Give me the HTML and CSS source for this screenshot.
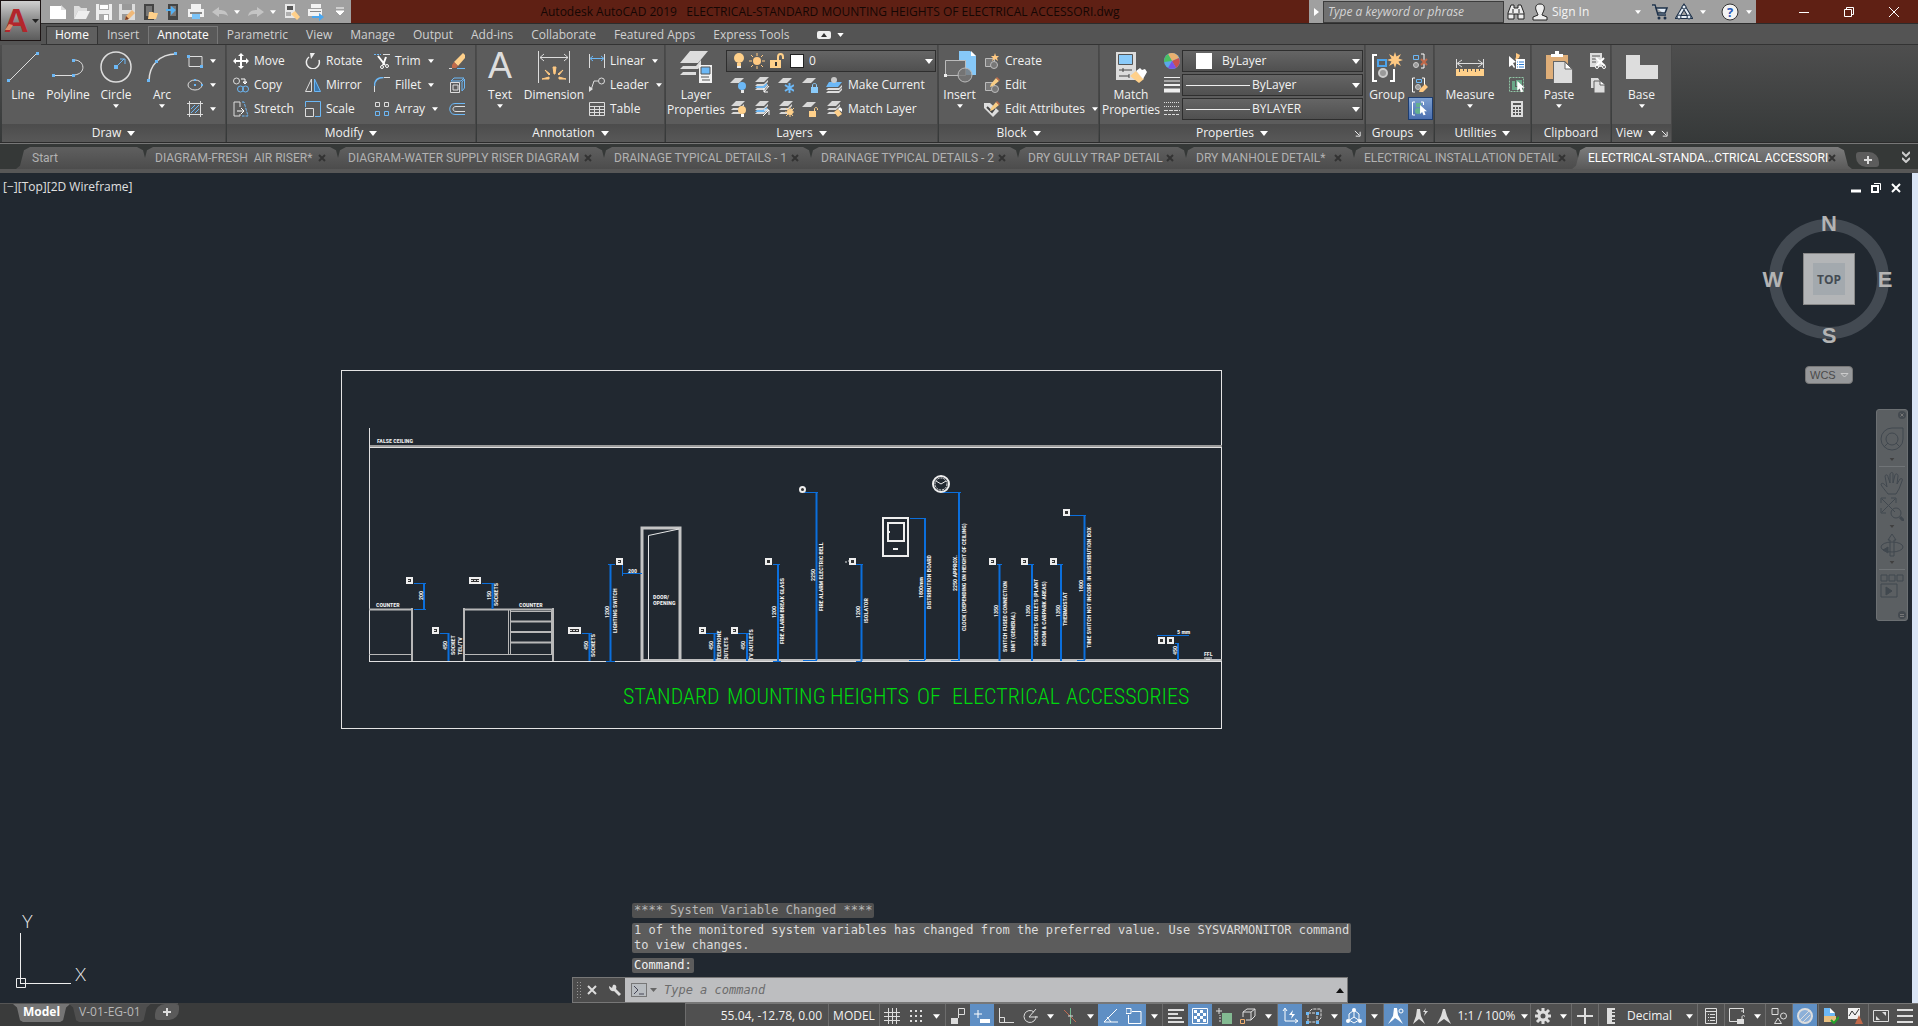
FILE: index.html
```html
<!DOCTYPE html>
<html lang="en">
<head>
  <meta charset="UTF-8" />
  <meta name="viewport" content="width=device-width, initial-scale=1" />
  <title>Autodesk AutoCAD 2019 - ELECTRICAL-STANDARD MOUNTING HEIGHTS OF ELECTRICAL ACCESSORI.dwg</title>
  <link rel="stylesheet" href="styles.css">
</head>
<body>
  <!-- Shared icons -->
  <svg class="sprite" aria-hidden="true">
    <symbol id="caret" viewBox="0 0 8 5"><path d="M0 0h8L4 5z" fill="#fff"/></symbol>
    <symbol id="close" viewBox="0 0 8 8"><path d="M1 1l6 6M7 1L1 7" stroke="#333" stroke-width="2"/></symbol>
    <symbol id="sheets" viewBox="0 0 16 16"><path d="M6 0h9l-5 5H1zM3 7h7l4-4v2l-4 4H1zM3 11h7l4-4v2l-4 4H1z" fill="#d8d8d8"/></symbol>
    <symbol id="sheet" viewBox="0 0 16 16"><path d="M5 1h9L9 6H0z" fill="#d8d8d8"/></symbol>
    <symbol id="pencil" viewBox="0 0 16 16"><path d="M7 7l5-6 3 3-6 5-3 1z" fill="#f8cd85"/><path d="M12 1l1-1 3 3-1 1z" fill="#c06a48"/></symbol>
    <symbol id="star" viewBox="0 0 16 16"><path d="M8 0l1.500 4.500L14 2l-2.500 4.500L16 8l-4.500 1.500L14 14l-4.500-2.500L8 16l-1.500-4.500L2 14l2.500-4.500L0 8l4.500-1.500L2 2l4.500 2.500z" fill="#ffc982"/></symbol>
    <symbol id="cursor" viewBox="0 0 16 16"><path d="M3 0v13l3-3 2 5 3-1-2-5h4z" fill="#fff"/></symbol>
    <symbol id="launch" viewBox="0 0 8 8"><path d="M1 1l5 5M2 7h5V2" stroke="#fff" fill="none"/></symbol>
  </svg>

  <header class="top">
    <button class="app-button" aria-label="Application menu">
      <svg width="39" height="39" viewBox="0 0 39 39"><text x="3" y="31" class="logo-a">A</text><path d="M4 29l4-6 4 1-3 5z" fill="#d98f6c"/><path d="M31 18h7l-3.500 4z" fill="#222"/></svg>
    </button>

    <div class="title-bar">
      <div class="quick">
        <button aria-label="New"><svg viewBox="0 0 18 18"><path d="M1 3h11l5 4v9H1z" fill="#fff"/><path d="M12 2v5h5z" fill="#ddd"/></svg></button>
        <button aria-label="Open"><svg viewBox="0 0 18 18"><path d="M2 16V3h5l2 2h6v3H6z" fill="#ddd"/><path d="M6 8h12l-4 8H2z" fill="#eee"/></svg></button>
        <button aria-label="Save"><svg viewBox="0 0 18 18"><path d="M1 1h16v16H1z" fill="#eee"/><path d="M4 1h10v6H4zM4 11h10v6H4z" fill="#aaa"/><path d="M5 2h8v4H5zM9 12h4v5H9z" fill="#fff"/></svg></button>
        <button aria-label="Save as"><svg viewBox="0 0 18 18"><path d="M1 1h16v16H1z" fill="#ddd"/><path d="M4 1h10v6H4zM4 11h6v6H4z" fill="#999"/><path d="M8 13l6-6 3 3-6 6-4 1z" fill="#f0b878"/><path d="M8 13l3 3-4 1z" fill="#7b3d24"/></svg></button>
        <button aria-label="Open from mobile"><svg viewBox="0 0 18 18"><path d="M3 1h10v16H3z" fill="#444"/><path d="M5 3h6v10H5z" fill="#777"/><path d="M8 9h4l1 1h4l-2 6H7z" fill="#ffd08a"/></svg></button>
        <button aria-label="Save to mobile"><svg viewBox="0 0 18 18"><path d="M4 1h10v16H4z" fill="#444"/><path d="M6 3h6v10H6z" fill="#777"/><path d="M2 6h5V3l5 4-5 5V8H2z" fill="#55b0f2"/></svg></button>
        <button aria-label="Plot"><svg viewBox="0 0 18 18"><path d="M4 1h10v5H4zM1 6h16v8H1z" fill="#f2f2f2"/><path d="M3 9h12v2H3z" fill="#888"/><path d="M5 11h8v5H5z" fill="#7cc4f8"/></svg></button>
        <button aria-label="Undo"><svg viewBox="0 0 18 18"><path d="M1 9l7-5v3c6 0 8 2 9 6-3-2-5-2-9-2v3z" fill="#c4c4c4"/></svg></button>
        <svg class="caret"><use href="#caret"/></svg>
        <button aria-label="Redo"><svg viewBox="0 0 18 18"><path d="M17 9l-7-5v3c-6 0-8 2-9 6 3-2 5-2 9-2v3z" fill="#c4c4c4"/></svg></button>
        <svg class="caret"><use href="#caret"/></svg>
        <button aria-label="Match properties"><svg viewBox="0 0 18 18"><path d="M2 1h10v14H2z" fill="#e8e8e8"/><path d="M4 3h6v4H4z" fill="#555"/><path d="M3 10h5M3 12h5" stroke="#777"/><path d="M8 11l4-3 5 6-3 3z" fill="#ffd08a"/></svg></button>
        <button aria-label="Batch plot"><svg viewBox="0 0 18 18"><path d="M4 1h10v4H4zM1 6h14v7H1z" fill="#f2f2f2"/><path d="M3 8h11v1H3z" fill="#888"/><path d="M5 13h7v-3l5 4-5 4v-3H5z" fill="#4aa6ee"/></svg></button>
        <button class="quick-more" aria-label="Customize"><svg viewBox="0 0 10 10"><path d="M1 1h8M1 4h8L5 8z" fill="#fff" stroke="#fff"/></svg></button>
      </div>
      <h1>Autodesk AutoCAD 2019 &nbsp; ELECTRICAL-STANDARD MOUNTING HEIGHTS OF ELECTRICAL ACCESSORI.dwg</h1>
      <div class="info">
        <button class="info-toggle" aria-label="Collapse"><svg viewBox="0 0 5 8"><path d="M0 0l5 4-5 4z" fill="#fff"/></svg></button>
        <input class="search" type="text" placeholder="Type a keyword or phrase" aria-label="Search">
        <button aria-label="Find"><svg viewBox="0 0 18 18"><path d="M4 2h3v3h4V2h3l3 8v6h-6v-5H7v5H1v-6z" fill="#eee" stroke="#222"/><path d="M1 11h6M11 11h6M6 6v4M12 6v4" stroke="#222"/></svg></button>
        <a class="sign-in" href="#"><svg viewBox="0 0 18 18"><path d="M9 1c4 0 5 3 4 6s-2 4-2 5l5 2v3H2v-3l5-2c0-1-1-2-2-5S5 1 9 1z" fill="#eee" stroke="#222"/></svg>Sign In</a>
        <svg class="caret"><use href="#caret"/></svg>
        <button class="store" aria-label="Store"><svg viewBox="0 0 18 18"><path d="M1 2h3l3 10h8M5 5h11l-2 5H6" fill="#dfe8f2" stroke="#1d3048" stroke-width="1.500"/><circle cx="8" cy="15" r="1.500" fill="#1d3048"/><circle cx="14" cy="15" r="1.500" fill="#1d3048"/></svg></button>
        <button aria-label="Stay connected"><svg viewBox="0 0 18 18"><path d="M9 4l6 10H3z" fill="none" stroke="#1d3048" stroke-width="4"/><path d="M9 4l6 10H3z" fill="none" stroke="#e6eef6" stroke-width="2"/><circle cx="9" cy="4" r="2" fill="#e6eef6" stroke="#1d3048"/><circle cx="4" cy="14" r="2" fill="#e6eef6" stroke="#1d3048"/><circle cx="14" cy="14" r="2" fill="#e6eef6" stroke="#1d3048"/></svg></button>
        <svg class="caret"><use href="#caret"/></svg>
        <button class="help" aria-label="Help"><svg viewBox="0 0 18 18"><circle cx="9" cy="9" r="8" fill="#f4f4f4" stroke="#333"/><text x="6" y="14" class="help-mark">?</text></svg></button>
        <svg class="caret"><use href="#caret"/></svg>
      </div>
      <div class="window-buttons">
        <button aria-label="Minimize"><svg viewBox="0 0 12 12"><path d="M1 6.500h10" stroke="#fff"/></svg></button>
        <button aria-label="Restore"><svg viewBox="0 0 12 12"><path d="M1.500 3.500h7v7h-7zM3.500 3V1.500h7v7H9" fill="none" stroke="#fff"/></svg></button>
        <button aria-label="Close"><svg viewBox="0 0 12 12"><path d="M1 1l10 10M11 1L1 11" stroke="#fff"/></svg></button>
      </div>
    </div>

    <nav class="ribbon-tabs">
      <a class="current" href="#">Home</a><a href="#">Insert</a><a class="hover" href="#">Annotate</a><a href="#">Parametric</a><a href="#">View</a><a href="#">Manage</a><a href="#">Output</a><a href="#">Add-ins</a><a href="#">Collaborate</a><a href="#">Featured Apps</a><a href="#">Express Tools</a>
      <button class="ribbon-toggle" aria-label="Minimize ribbon"><svg width="14" height="8"><rect width="14" height="8" rx="2" fill="#eee"/><path d="M4 6h6L7 2z" fill="#333"/></svg><svg class="caret"><use href="#caret"/></svg></button>
    </nav>
  </header>

  <!-- Ribbon -->
  <div class="ribbon">
    <section class="panel draw">
      <div class="tools">
        <button class="big w-line"><svg viewBox="0 0 32 32"><path d="M2 30L30 2" stroke="#ddd"/><path d="M0 28h3v3H0zM29 1h3v3h-3z" fill="#6cb8f6"/></svg><span>Line</span></button>
        <button class="big w-poly"><svg viewBox="0 0 32 32"><path d="M1 24.500h21M21 9c12-1 14 14 1 15" fill="none" stroke="#ddd"/><path d="M0 23h3v3H0zM20 23h3v3h-3zM20 8h3v3h-3z" fill="#6cb8f6"/></svg><span>Polyline</span></button>
        <button class="big w-circle"><svg viewBox="0 0 32 32"><circle cx="16" cy="16" r="15" fill="none" stroke="#ddd" stroke-width="1.500"/><path d="M16 16l8-8M20 8h5v5" fill="none" stroke="#6cb8f6"/><path d="M14 14h4v4h-4z" fill="#6cb8f6"/></svg><span>Circle</span><svg class="caret"><use href="#caret"/></svg></button>
        <button class="big w-arc"><svg viewBox="0 0 32 32"><path d="M3 30C3 14 14 3 30 3" fill="none" stroke="#ddd" stroke-width="1.500"/><path d="M1 28h3v3H1zM28 1h3v3h-3zM9 9h3v3H9z" fill="#6cb8f6"/></svg><span>Arc</span><svg class="caret"><use href="#caret"/></svg></button>
        <div class="stack">
          <button class="small" aria-label="Rectangle"><svg viewBox="0 0 16 16"><path d="M2 3.500h13v10H2z" fill="none" stroke="#ddd"/><path d="M0 2h3v3H0zM13 12h3v3h-3z" fill="#6cb8f6"/></svg><svg class="caret"><use href="#caret"/></svg></button>
          <button class="small" aria-label="Ellipse"><svg viewBox="0 0 16 16"><ellipse cx="8" cy="8" rx="7" ry="5" fill="none" stroke="#ddd"/><path d="M7 7h2v2H7zM7 2h2v2H7zM14 7h2v2h-2z" fill="#6cb8f6"/></svg><svg class="caret"><use href="#caret"/></svg></button>
          <button class="small" aria-label="Hatch"><svg viewBox="0 0 16 16"><path d="M2.500 0v16M13.500 0v16M0 2.500h16M0 13.500h16" stroke="#ddd"/><path d="M4 8l4-4M4 12l8-8M8 12l4-4" stroke="#6cb8f6"/></svg><svg class="caret"><use href="#caret"/></svg></button>
        </div>
      </div>
      <h2>Draw <svg class="caret"><use href="#caret"/></svg></h2>
    </section>

    <section class="panel modify">
      <div class="tools">
        <div class="stack col-a">
          <button class="small"><svg viewBox="0 0 16 16"><path d="M8 0l3 3H9v4h4V5l3 3-3 3V9H9v4h2l-3 3-3-3h2V9H3v2L0 8l3-3v2h4V3H5z" fill="#fff"/></svg><span>Move</span></button>
          <button class="small"><svg viewBox="0 0 16 16"><circle cx="3.500" cy="4" r="3" fill="none" stroke="#ddd"/><path d="M8 2h4v4M10 5h4l-2 2z" fill="none" stroke="#fff"/><circle cx="7.500" cy="12" r="3" fill="none" stroke="#6cb8f6"/><circle cx="12.500" cy="12" r="3" fill="none" stroke="#6cb8f6"/></svg><span>Copy</span></button>
          <button class="small"><svg viewBox="0 0 16 16"><path d="M7 6V1H1v14h6v-2" fill="none" stroke="#ddd"/><path d="M4 10h6M8 7l3 3-3 3" stroke="#fff" fill="none"/><path d="M9 1h2l4 14H9" fill="none" stroke="#6cb8f6" stroke-dasharray="3 1"/></svg><span>Stretch</span></button>
        </div>
        <div class="stack col-b">
          <button class="small"><svg viewBox="0 0 16 16"><path d="M4 4a6.500 6.500 0 1 0 10 3" fill="none" stroke="#eee" stroke-width="1.500"/><path d="M5 0h5L6 6z" fill="#eee"/></svg><span>Rotate</span></button>
          <button class="small"><svg viewBox="0 0 16 16"><path d="M6.500 2v12.500h-6z" fill="none" stroke="#ddd"/><path d="M9.500 2v12.500h6z" fill="#3c78ae" stroke="#6cb8f6"/></svg><span>Mirror</span></button>
          <button class="small"><svg viewBox="0 0 16 16"><path d="M.5 6V.5h15v15H10" fill="none" stroke="#6cb8f6"/><path d="M.5 7.500h8v8h-8z" fill="none" stroke="#ddd"/></svg><span>Scale</span></button>
        </div>
        <div class="stack col-c">
          <button class="small"><svg viewBox="0 0 16 16"><path d="M0 1.500h7" stroke="#6cb8f6" stroke-dasharray="2 1"/><path d="M9 1.500h7" stroke="#ddd"/><path d="M4 3l7 9M12 4l-3 8" stroke="#fff" stroke-width="2"/><circle cx="8" cy="14" r="1.500" fill="none" stroke="#fff"/><circle cx="13" cy="13" r="1.500" fill="none" stroke="#fff"/></svg><span>Trim</span><svg class="caret"><use href="#caret"/></svg></button>
          <button class="small"><svg viewBox="0 0 16 16"><path d="M.5 15V9M10 .5h6" stroke="#ddd"/><path d="M.5 9c0-6 3-8.500 9-8.500" fill="none" stroke="#6cb8f6" stroke-width="1.500"/></svg><span>Fillet</span><svg class="caret"><use href="#caret"/></svg></button>
          <button class="small"><svg viewBox="0 0 16 16"><path d="M1.500 1.500h4v4h-4zM10.500 1.500h4v4h-4z" fill="none" stroke="#ddd"/><path d="M1.500 10.500h4v4h-4zM10.500 10.500h4v4h-4z" fill="none" stroke="#6cb8f6"/></svg><span>Array</span><svg class="caret"><use href="#caret"/></svg></button>
        </div>
        <div class="stack">
          <button class="small" aria-label="Erase"><svg viewBox="0 0 16 16"><path d="M5 9L14 0l2 2v3l-7 8z" fill="#ffd08a"/><path d="M5 9l4 4-2 2H3v-3z" fill="#c0694a"/><path d="M0 15.500h3" stroke="#ddd"/><path d="M8 15.500h8" stroke="#6cb8f6"/></svg></button>
          <button class="small" aria-label="Explode"><svg viewBox="0 0 16 16"><path d="M1.500 5.500h9v10h-9zM4 8h5v5H4z" fill="none" stroke="#ddd"/><path d="M2 4l3-3h10l-3 3zM13 5l2.500-3v9L13 14z" fill="none" stroke="#6cb8f6"/></svg></button>
          <button class="small" aria-label="Offset"><svg viewBox="0 0 16 16"><path d="M16 2.500H6c-7 0-7 11 0 11h10" fill="none" stroke="#6cb8f6"/><path d="M16 5.500H7c-4 0-4 5 0 5h9" fill="none" stroke="#ddd"/></svg></button>
        </div>
      </div>
      <h2>Modify <svg class="caret"><use href="#caret"/></svg></h2>
    </section>

    <section class="panel annotation">
      <div class="tools">
        <button class="big w-text"><svg viewBox="0 0 32 32"><text x="16" y="27" class="big-a">A</text></svg><span>Text</span><svg class="caret"><use href="#caret"/></svg></button>
        <button class="big w-dim"><svg viewBox="0 0 32 32"><path d="M.5 0v32M31.500 0v32M2 6.500h28M6 3L2 6.500 6 10M26 3l4 3.500-4 3.500" stroke="#ddd" fill="none"/><path d="M15 16h3l-1 7h-1zM7 19l5 4-1 1zM25 19l-5 4 1 1zM4 28l7-2v2zM28 28l-7-2v2z" fill="#ffc982" stroke="#ffc982"/></svg><span>Dimension</span></button>
        <div class="stack">
          <button class="small"><svg viewBox="0 0 16 16"><path d="M.5 1v14M15.500 1v14" stroke="#ddd"/><path d="M2 5.500h12M4 3L1 5.500 4 8M12 3l3 2.500L12 8" fill="none" stroke="#6cb8f6"/></svg><span>Linear</span><svg class="caret"><use href="#caret"/></svg></button>
          <button class="small"><svg viewBox="0 0 16 16"><circle cx="12.500" cy="4" r="3" fill="none" stroke="#ddd"/><path d="M9 4H5L2 13" fill="none" stroke="#ddd"/><path d="M0 15v-6l4 3z" fill="#ddd"/></svg><span>Leader</span><svg class="caret"><use href="#caret"/></svg></button>
          <button class="small"><svg viewBox="0 0 16 16"><path d="M.5 1.500h15v13H.5zM0 5.500h16M0 8.500h16M0 11.500h16M5.500 5v10M10.500 5v10" fill="none" stroke="#ddd"/></svg><span>Table</span></button>
        </div>
      </div>
      <h2>Annotation <svg class="caret"><use href="#caret"/></svg></h2>
    </section>

    <section class="panel layers">
      <div class="tools">
        <button class="big w-layer"><svg viewBox="0 0 32 32"><path d="M10 0h18L18 12H0zM3 15h13l5-6v6l-3 3H0zM3 21h13v3H0z" fill="#ddd"/><path d="M19 14h13v18H19z" fill="#f2f2f2"/><path d="M21 16h9v7h-9z" fill="#6cb8f6" stroke="#555"/><path d="M21 26h8M22 29h8" stroke="#555"/></svg><span>Layer<br>Properties</span></button>
        <div class="layer-side">
          <div class="combo">
            <svg width="54" height="18" viewBox="0 0 54 18"><circle cx="7" cy="6" r="5" fill="#ffd08a"/><path d="M5 11h4v4H5z" fill="#ffd08a"/><path d="M5 14h4v2H5z" fill="#eee"/><circle cx="25" cy="9" r="4" fill="#ffc982"/><path d="M25 1v3M25 14v3M17 9h3M30 9h3M19 3l2 2M29 13l2 2M31 3l-2 2M21 13l-2 2" stroke="#ffc982"/><path d="M38 8h11v8H38z" fill="#ffd08a"/><path d="M46 8V5c0-4 5-4 5 0v2" fill="none" stroke="#ffd08a" stroke-width="2"/><path d="M43 10h2v4h-2z" fill="#333"/></svg>
            <i class="swatch small-swatch"></i>
            <select aria-label="Layer"><option>0</option></select>
            <svg class="caret"><use href="#caret"/></svg>
          </div>
          <div class="row">
            <button aria-label="Layer off"><svg viewBox="0 0 16 16"><use href="#sheet"/><circle cx="12" cy="9" r="4" fill="#6cb8f6"/><path d="M11 13h3v3h-3z" fill="#e8e8e8"/></svg></button>
            <button aria-label="Isolate"><svg viewBox="0 0 16 16"><use href="#sheets"/><path d="M3 9h6l4-3v2l-3 3H1z" fill="#6cb8f6"/><path d="M15 9l-5 6M10 11v4h4" stroke="#fff" fill="none"/></svg></button>
            <button aria-label="Freeze"><svg viewBox="0 0 16 16"><use href="#sheet"/><path d="M11.500 6v10M7 8l9 6M16 8l-9 6" stroke="#6cb8f6" stroke-width="2"/></svg></button>
            <button aria-label="Lock"><svg viewBox="0 0 16 16"><use href="#sheet"/><path d="M9 10h7v6H9z" fill="#8acbfa"/><path d="M10.500 10V8c0-2 4-2 4 0v2" fill="none" stroke="#8acbfa"/></svg></button>
            <button class="make"><svg viewBox="0 0 16 16"><path d="M3 5h13l-4 5H0z" fill="#6cb8f6"/><path d="M2 11h11l3-3v2l-3 3H0zM2 14h11l3-3v2l-3 3H0z" fill="#ddd"/><circle cx="8" cy="3" r="3" fill="#c8c8c8"/></svg><span>Make Current</span></button>
          </div>
          <div class="row">
            <button aria-label="Layers on"><svg viewBox="0 0 16 16"><use href="#sheets"/><circle cx="12" cy="9" r="4" fill="#ffd08a"/><path d="M11 13h3v3h-3z" fill="#fff"/></svg></button>
            <button aria-label="Unisolate"><svg viewBox="0 0 16 16"><use href="#sheets"/><path d="M3 9h6l4-3v2l-3 3H1z" fill="#6cb8f6"/><path d="M9 15l6-6M10 9h5v5" stroke="#fff" fill="none"/></svg></button>
            <button aria-label="Thaw"><svg viewBox="0 0 16 16"><use href="#sheets"/><circle cx="12" cy="11" r="3" fill="#ffd08a"/><path d="M12 6v10M7 11h9M8 7l7 8M16 7l-8 8" stroke="#ffd08a"/></svg></button>
            <button aria-label="Unlock"><svg viewBox="0 0 16 16"><use href="#sheet"/><path d="M7 10h7v6H7z" fill="#ffd08a"/><path d="M12.500 10V8c0-2 3-2 3 0v1" fill="none" stroke="#ffd08a"/></svg></button>
            <button class="make"><svg viewBox="0 0 16 16"><use href="#sheets"/><path d="M8 11l4-3 4 5-4 3z" fill="#ffd08a"/><path d="M12 8l2-2 2 2v3z" fill="#fff"/></svg><span>Match Layer</span></button>
          </div>
        </div>
      </div>
      <h2>Layers <svg class="caret"><use href="#caret"/></svg></h2>
    </section>

    <section class="panel block">
      <div class="tools">
        <button class="big w-insert"><svg viewBox="0 0 32 32"><path d="M15 0h11l6 5v19H15z" fill="#86c8f8"/><path d="M27 0v5h5z" fill="#fff"/><path d="M1.500 9.500h20v15h-20z" fill="#6a6a6a" stroke="#bbb"/><circle cx="21" cy="24" r="7" fill="#777" fill-opacity=".8" stroke="#bbb"/><path d="M0 23h3v3H0z" fill="#eee"/></svg><span>Insert</span><svg class="caret"><use href="#caret"/></svg></button>
        <div class="stack">
          <button class="small"><svg viewBox="0 0 16 16"><path d="M1.500 5.500h9v8h-9z" fill="#777" stroke="#bbb"/><circle cx="10" cy="12" r="3.500" fill="#777" stroke="#bbb"/><path d="M11 0l1 3h3l-2 2 1 3-3-2-3 2 1-3-2-2h3z" fill="#ffc982"/></svg><span>Create</span></button>
          <button class="small"><svg viewBox="0 0 16 16"><path d="M1.500 5.500h9v8h-9z" fill="#777" stroke="#bbb"/><circle cx="11" cy="12" r="3.500" fill="#777" stroke="#bbb"/><use href="#pencil"/></svg><span>Edit</span></button>
          <button class="small"><svg viewBox="0 0 16 16"><path d="M0 2h6l9 8-6 6-9-9z" fill="#ddd"/><path d="M3 6l5 5 3-4" fill="none" stroke="#444" stroke-width="2"/><use href="#pencil"/></svg><span>Edit Attributes</span><svg class="caret"><use href="#caret"/></svg></button>
        </div>
      </div>
      <h2>Block <svg class="caret"><use href="#caret"/></svg></h2>
    </section>

    <section class="panel properties">
      <div class="tools">
        <button class="big w-match"><svg viewBox="0 0 32 32"><path d="M1 1h20v28H1z" fill="#ddd"/><path d="M3.500 3.500h14v10h-14z" fill="#8acbfa" stroke="#555"/><path d="M4 19h13M4 25h10M8 17v4M14 23v4" stroke="#444"/><path d="M15 25l6-5 8 8-5 4z" fill="#ffd08a"/><path d="M21 20l4-3 2 2 3-1 2 3-4 7z" fill="#fff"/></svg><span>Match<br>Properties</span></button>
        <div class="stack icons">
          <span class="cell"><svg viewBox="0 0 16 16"><circle cx="8" cy="8" r="8" fill="#5aa8e8"/><path d="M8 8L4 1c4-2 9-1 11 4z" fill="#e8b070"/><path d="M8 8l7-3c2 4 0 8-3 10z" fill="#c85050"/><path d="M8 8l4 7c-3 1-6 1-8 0z" fill="#7a50e8"/><path d="M8 8L0 9c0-3 1-6 4-8z" fill="#4ac060"/></svg></span>
          <span class="cell"><svg viewBox="0 0 16 16"><path d="M0 .5h16M0 4h16" stroke="#eee"/><path d="M0 8h16" stroke="#eee" stroke-width="2"/><path d="M0 13.500h16" stroke="#eee" stroke-width="4"/></svg></span>
          <span class="cell"><svg viewBox="0 0 16 16"><path d="M0 1.500h16M0 5.500h16" stroke="#ddd" stroke-dasharray="1 1"/><path d="M0 9.500h16" stroke="#ddd" stroke-dasharray="4 1"/><path d="M0 13.500h16" stroke="#ddd" stroke-dasharray="3 1"/></svg></span>
        </div>
        <div class="stack combos">
          <div class="combo"><i class="swatch"></i><select aria-label="Color"><option>ByLayer</option></select><svg class="caret"><use href="#caret"/></svg></div>
          <div class="combo"><i class="rule"></i><select aria-label="Lineweight"><option>ByLayer</option></select><svg class="caret"><use href="#caret"/></svg></div>
          <div class="combo"><i class="rule"></i><select aria-label="Linetype"><option>BYLAYER</option></select><svg class="caret"><use href="#caret"/></svg></div>
        </div>
      </div>
      <h2>Properties <svg class="caret"><use href="#caret"/></svg><svg class="launch"><use href="#launch"/></svg></h2>
    </section>

    <section class="panel groups">
      <div class="tools">
        <button class="big w-group"><svg viewBox="0 0 32 32"><path d="M6 4H2v26h4M19 30h4V18" fill="none" stroke="#fff" stroke-width="2"/><path d="M7 9h8v6H7z" fill="none" stroke="#4da3ea" stroke-width="2"/><circle cx="12" cy="22" r="4" fill="#999" stroke="#ccc" stroke-width="2"/><svg x="16" y="1" width="16" height="16"><use href="#star"/></svg></svg><span>Group</span></button>
        <div class="stack">
          <button class="small" aria-label="Ungroup"><svg viewBox="0 0 16 16"><path d="M1.500 2.500h5v4h-5z" fill="none" stroke="#6cb8f6"/><circle cx="4" cy="12" r="2.500" fill="#999" stroke="#ccc"/><path d="M9 1h3v14H9" fill="none" stroke="#fff"/><path d="M9 6l6 6M15 6l-6 6" stroke="#c0694a" stroke-width="2"/></svg></button>
          <button class="small" aria-label="Group edit"><svg viewBox="0 0 16 16"><path d="M3 1H.5v14H3M10 1h2.500v7" fill="none" stroke="#fff"/><path d="M4.500 2.500h5v3h-5z" fill="none" stroke="#6cb8f6"/><circle cx="6" cy="10" r="2.500" fill="#999" stroke="#ccc"/><path d="M7 15l1-3 5-5 3 3-5 5z" fill="#ffc982"/></svg></button>
          <button class="small on" aria-label="Group selection"><svg viewBox="0 0 16 16"><path d="M3 1H.5v13H3M9 1h2.500v3" fill="none" stroke="#fff"/><path d="M4 2h5v4H4z" fill="#64b090"/><circle cx="6" cy="10" r="3" fill="#64b090"/><svg x="6" y="3" width="11" height="13"><use href="#cursor"/></svg></svg></button>
        </div>
      </div>
      <h2>Groups <svg class="caret"><use href="#caret"/></svg></h2>
    </section>

    <section class="panel utilities">
      <div class="tools">
        <button class="big w-measure"><svg viewBox="0 0 32 32"><path d="M2.500 8v9M29.500 8v9M4 12.500h24M8 9l-5 3.500L8 16M24 9l5 3.500-5 3.500" fill="none" stroke="#ddd"/><path d="M2 18h28v7H2z" fill="#ffd08a"/><path d="M5.500 18v3M9.500 18v2M13.500 18v3M17.500 18v2M21.500 18v3M25.500 18v2" stroke="#555"/></svg><span>Measure</span><svg class="caret"><use href="#caret"/></svg></button>
        <div class="stack">
          <button class="small" aria-label="Quick select"><svg viewBox="0 0 16 16"><path d="M7 0l4 2-1 3-4 2 1-3z" fill="#ffc982"/><path d="M0 3v11l3-2 2 3 1-1-2-4 3-1z" fill="#fff"/><path d="M7 6h9v10H7z" fill="#fff"/><path d="M8 9h1M8 11.500h1M8 14h1M10 9h5M10 11.500h5M10 14h5" stroke="#2a7ad0"/></svg></button>
          <button class="small" aria-label="Select all"><svg viewBox="0 0 16 16"><path d="M.5.5h14v14H.5z" fill="none" stroke="#8fc4a4" stroke-dasharray="2 1"/><path d="M3 4h3v6h4v3H3zM7 3h6v6H7z" fill="#6aa888"/><svg x="6" y="4" width="12" height="12"><use href="#cursor"/></svg></svg></button>
          <button class="small" aria-label="Calculator"><svg viewBox="0 0 16 16"><path d="M2 0h12v16H2z" fill="#ddd"/><path d="M4 2h8v2H4zM4 6h2v2H4zM7 6h2v2H7zM10 6h2v2h-2zM4 9h2v2H4zM7 9h2v2H7zM10 9h2v2h-2zM4 12h2v2H4zM7 12h2v2H7zM10 12h2v2h-2z" fill="#555"/></svg></button>
        </div>
      </div>
      <h2>Utilities <svg class="caret"><use href="#caret"/></svg></h2>
    </section>

    <section class="panel clipboard">
      <div class="tools">
        <button class="big w-paste"><svg viewBox="0 0 32 32"><path d="M3 4h22v24H3z" fill="#dfae78"/><path d="M8 3h4V0h4v3h4v3H8z" fill="#fff"/><path d="M10 10h12l8 8v14H10z" fill="#666"/><path d="M11 11h11l7 7v14H11z" fill="#ddd"/><path d="M22 11v7h7z" fill="#fff" stroke="#666"/></svg><span>Paste</span><svg class="caret"><use href="#caret"/></svg></button>
        <div class="stack">
          <button class="small" aria-label="Cut"><svg viewBox="0 0 16 16"><path d="M0 0h12v14H0z" fill="#ddd"/><path d="M2 3h8M2 6h5M2 9h4" stroke="#555"/><path d="M6 5l9 8M14 5l-8 8" stroke="#fff" stroke-width="2"/><circle cx="14" cy="14" r="1.500" fill="#555" stroke="#fff"/><circle cx="7" cy="14" r="1.500" fill="#555" stroke="#fff"/></svg></button>
          <button class="small" aria-label="Copy clip"><svg viewBox="0 0 16 16"><path d="M1 1h7l2 3v7H1z" fill="#ddd"/><path d="M4 4h6l5 4v8H4z" fill="#ddd" stroke="#5c5c5c"/><path d="M10 4v4h5" fill="#fff" stroke="#5c5c5c"/></svg></button>
        </div>
      </div>
      <h2>Clipboard</h2>
    </section>

    <section class="panel view">
      <div class="tools">
        <button class="big w-base"><svg viewBox="0 0 32 32"><path d="M0 4h14v10h18v14H0z" fill="#ddd"/></svg><span>Base</span><svg class="caret"><use href="#caret"/></svg></button>
      </div>
      <h2>View <svg class="caret"><use href="#caret"/></svg><svg class="launch"><use href="#launch"/></svg></h2>
    </section>
  </div>

  <!-- Open drawings -->
  <nav class="file-tabs">
    <div class="file-tab start"><a href="#">Start</a></div>
    <div class="file-tab riser"><a href="#">DIAGRAM-FRESH&nbsp; AIR RISER*</a><button aria-label="Close tab"><svg><use href="#close"/></svg></button></div>
    <div class="file-tab water"><a href="#">DIAGRAM-WATER SUPPLY RISER DIAGRAM</a><button aria-label="Close tab"><svg><use href="#close"/></svg></button></div>
    <div class="file-tab drain"><a href="#">DRAINAGE TYPICAL DETAILS - 1</a><button aria-label="Close tab"><svg><use href="#close"/></svg></button></div>
    <div class="file-tab drain"><a href="#">DRAINAGE TYPICAL DETAILS - 2</a><button aria-label="Close tab"><svg><use href="#close"/></svg></button></div>
    <div class="file-tab gully"><a href="#">DRY GULLY TRAP DETAIL</a><button aria-label="Close tab"><svg><use href="#close"/></svg></button></div>
    <div class="file-tab gully"><a href="#">DRY MANHOLE DETAIL*</a><button aria-label="Close tab"><svg><use href="#close"/></svg></button></div>
    <div class="file-tab install"><a href="#">ELECTRICAL INSTALLATION DETAIL</a><button aria-label="Close tab"><svg><use href="#close"/></svg></button></div>
    <div class="file-tab active"><a href="#">ELECTRICAL-STANDA...CTRICAL ACCESSORI</a><button aria-label="Close tab"><svg><use href="#close"/></svg></button></div>
    <button class="new-tab" aria-label="New drawing"><svg viewBox="0 0 8 8"><path d="M4 0v8M0 4h8" stroke="#ddd" stroke-width="2"/></svg></button>
    <button class="tab-menu" aria-label="More tabs"><svg width="8" height="12"><path d="M0 1l4 4 4-4M0 7l4 4 4-4" fill="none" stroke="#ccc" stroke-width="2"/></svg></button>
  </nav>

  <!-- Model space -->
  <main class="model">
    <p class="view-label">[−][Top][2D Wireframe]</p>
    <div class="view-buttons">
      <button aria-label="Minimize view"><svg viewBox="0 0 10 10"><path d="M0 8h10" stroke="#fff" stroke-width="3"/></svg></button>
      <button aria-label="Restore view"><svg viewBox="0 0 10 10"><path d="M1 3h6v6H1z" fill="none" stroke="#fff" stroke-width="2"/><path d="M3 .5h6.500V7" fill="none" stroke="#fff"/></svg></button>
      <button aria-label="Close view"><svg viewBox="0 0 10 10"><path d="M1 1l8 8M9 1L1 9" stroke="#fff" stroke-width="2"/></svg></button>
    </div>

    <svg class="drawing" viewBox="330 360 900 380">
      <rect x="341.500" y="370.500" width="880" height="358" fill="none" stroke="#e4e4e4"/>
      <!-- ceiling, wall, floor -->
      <path d="M369 446h853" stroke="#9a9a9a" stroke-width="2"/>
      <path d="M369 447.500h853M369.500 428v233M369 661.500h853" stroke="#e0e0e0"/>
      <path d="M642 660h580" stroke="#bdbdbd" stroke-width="2"/>
      <!-- counters -->
      <g fill="none" stroke="#b8b8b8">
        <path d="M369 609.500h43M412 608v53M464 608v53M553 608v53M464 609.500h90" stroke-width="2"/>
        <path d="M369 654.500h43M464 654.500h89M508.500 610v44M510.500 610v44M551.500 610v44M510 611.500h41" />
        <path d="M510 621.500h41M510 632h41M510 642.500h41" stroke-width="2"/>
      </g>
      <!-- door -->
      <path d="M642 661V528h38v133" fill="none" stroke="#c4c4c4" stroke-width="3"/>
      <path d="M648.500 660V535.500L679 529" fill="none" stroke="#e8e8e8"/>
      <!-- dimension lines -->
      <g fill="none" stroke="#0b6fdc">
        <path d="M414 583.500h12M414 609.500h12M440 633.500h9M482 583.500h12M582 633.500h10M608 564.500h7M622.500 565v11M622 573.500h20M706 633.500h12M738 633.500h12M773 564.500h7M804 492.500h14M856 564.500h7M910 518.500h16M942 492.500h19M997 564.500h5M1028 564.500h6M1057 564.500h6M1070 515.500h16M1157 635.500h32M1175 643.500h4"/>
        <path d="M803 660.500h14M909 660.500h16M951 660.500h9M856 661.500h6M773 661.500h8M1077 660.500h8M606 661.500h9"/>
        <path d="M424 583v26M448.500 633v28M492.500 583v26M589.500 633v28M610.500 564v97M714.500 633v28M747 633v28M778 564v97M816.500 492v168M861.500 564v97M925 518v142M959 492v168M999.500 564v97M1032 564v97M1061 564v97M1084.500 515v145M1178 643v17" stroke-width="2"/>
      </g>
      <!-- accessories -->
      <g fill="#333" stroke="#eee" stroke-width="2">
        <path d="M407 578h5v5h-5zM433 628h5v5h-5zM617 559h5v5h-5zM700 628h5v5h-5zM732 628h5v5h-5zM766 559h5v5h-5zM850 559h5v5h-5zM990 559h5v5h-5zM1022 559h5v5h-5zM1051 559h5v5h-5zM1064 510h5v5h-5zM1159 638h5v5h-5zM1168 638h5v5h-5z"/>
        <path d="M470 578h10v5h-10zM569 628h11v5h-11z"/>
        <circle cx="802.500" cy="489.500" r="2.500"/>
      </g>
      <path d="M471 580.500h8M570 630.500h9M408 580.500h3M434 630.500h3M618 561.500h3M701 630.500h3M733 630.500h3M991 561.500h3M1023 561.500h3M1052 561.500h3M846 561v3M848 561h2" stroke="#ddd" stroke-dasharray="2 1"/>
      <g fill="none" stroke="#eee">
        <rect x="883" y="518" width="25" height="38" stroke-width="2"/>
        <rect x="888" y="523" width="16" height="18" stroke-width="2"/>
        <path d="M893 549h5M888 532h2" stroke-width="2"/>
        <circle cx="941" cy="484" r="8" stroke-width="2"/><circle cx="941" cy="484" r="6" stroke-dasharray="2 1"/>
        <path d="M936 481l5 3 5-3"/>
        <path d="M1204 658h8M1206 659.500h4"/>
      </g>
      <g class="cad">
        <text x="377" y="443">FALSE CEILING</text>
        <text x="376" y="607">COUNTER</text>
        <text x="519" y="607">COUNTER</text>
        <text x="653" y="599">DOOR/</text><text x="653" y="605">OPENING</text>
        <text x="628" y="573">200</text>
        <text x="1177" y="634">5 mm</text>
        <text x="1204" y="656">FFL</text>
        <text transform="translate(423 600) rotate(-90)">200</text>
        <text transform="translate(447 650) rotate(-90)">450</text>
        <text transform="translate(455 655) rotate(-90)">SOCKET</text>
        <text transform="translate(462 655) rotate(-90)">TEL/TV</text>
        <text transform="translate(491 600) rotate(-90)">150</text>
        <text transform="translate(498 606) rotate(-90)">SOCKETS</text>
        <text transform="translate(588 650) rotate(-90)">450</text>
        <text transform="translate(595 657) rotate(-90)">SOCKETS</text>
        <text transform="translate(609 618) rotate(-90)">1200</text>
        <text transform="translate(617 633) rotate(-90)">LIGHTING SWITCH</text>
        <text transform="translate(713 650) rotate(-90)">450</text>
        <text transform="translate(721 660) rotate(-90)">TELEPHONE</text>
        <text transform="translate(728 660) rotate(-90)">OUTLETS</text>
        <text transform="translate(745 650) rotate(-90)">450</text>
        <text transform="translate(753 660) rotate(-90)">TV OUTLETS</text>
        <text transform="translate(776 618) rotate(-90)">1200</text>
        <text transform="translate(784 644) rotate(-90)">FIRE ALARM BREAK GLASS</text>
        <text transform="translate(815 581) rotate(-90)">2250</text>
        <text transform="translate(823 611) rotate(-90)">FIRE ALARM ELECTRIC BELL</text>
        <text transform="translate(860 618) rotate(-90)">1200</text>
        <text transform="translate(868 623) rotate(-90)">ISOLATOR</text>
        <text transform="translate(923 598) rotate(-90)">1800mm</text>
        <text transform="translate(931 609) rotate(-90)">DISTRIBUTION BOARD</text>
        <text transform="translate(957 591) rotate(-90)">2250 APPROX.</text>
        <text transform="translate(966 631) rotate(-90)">CLOCK (DEPENDING ON HEIGHT OF CEILING)</text>
        <text transform="translate(998 617) rotate(-90)">1350</text>
        <text transform="translate(1007 652) rotate(-90)">SWITCH FUSED CONNECTION</text>
        <text transform="translate(1015 652) rotate(-90)">UNIT (GENERAL)</text>
        <text transform="translate(1030 617) rotate(-90)">1350</text>
        <text transform="translate(1038 646) rotate(-90)">SOCKETS OUTLETS (PLANT</text>
        <text transform="translate(1046 646) rotate(-90)">ROOM &amp; CARPARK AREAS)</text>
        <text transform="translate(1060 617) rotate(-90)">1350</text>
        <text transform="translate(1067 626) rotate(-90)">THERMOSTAT</text>
        <text transform="translate(1083 592) rotate(-90)">1800</text>
        <text transform="translate(1091 648) rotate(-90)">TIME SWITCH NOT INCORP. IN DISTRIBUTION BOX</text>
        <text transform="translate(1177 655) rotate(-90)">450</text>
      </g>
      <text class="sheet-title" y="704"><tspan x="623">STANDARD </tspan><tspan x="727">MOUNTING </tspan><tspan x="830">HEIGHTS </tspan><tspan x="917">OF </tspan><tspan x="952">ELECTRICAL </tspan><tspan x="1066">ACCESSORIES</tspan></text>
    </svg>

    <div class="view-cube">
      <svg width="136" height="134" viewBox="-1 0 136 134">
        <circle cx="67" cy="67" r="54" fill="none" stroke="#434a52" stroke-width="12"/>
        <rect x="41.500" y="41.500" width="51" height="51" fill="#b3b5b7" stroke="#888"/>
        <rect x="51" y="51" width="32" height="32" fill="#a3a9ae"/>
        <g class="compass"><text x="67" y="19">N</text><text x="11" y="75">W</text><text x="123" y="75">E</text><text x="67" y="131">S</text></g>
        <text class="cube-face" x="67" y="72">TOP</text>
      </svg>
      <button class="wcs">WCS<svg width="9" height="5"><path d="M1 .5h7L4.500 4z" fill="none" stroke="#ccc"/></svg></button>
    </div>

    <div class="nav-bar">
      <button class="nav-dot" aria-label="Close navigation bar"><svg viewBox="0 0 8 8"><circle cx="4" cy="4" r="4" fill="#444a50"/><path d="M2.500 2.500l3 3M5.500 2.500l-3 3" stroke="#777"/></svg></button>
      <button class="wheel" aria-label="Full navigation wheel"><svg viewBox="0 0 24 24"><path d="M12 1h11v11a11 11 0 1 1-11-11z"/><circle cx="12" cy="12" r="6"/><path d="M4 20l4-4M20 20l-4-4"/></svg></button>
      <svg class="nav-caret"><use href="#caret"/></svg>
      <hr>
      <button aria-label="Pan"><svg viewBox="0 0 24 24"><path d="M8 23c-2-3-7-8-7-10 2-2 4 1 6 3L5 5c1-2 3-1 3 1l2 6V3c1-2 3-2 3 0v9l2-8c1-2 3-1 3 1l-1 8 3-5c2-1 3 0 2 2l-3 8-3 5z"/></svg></button>
      <button aria-label="Zoom extents"><svg viewBox="0 0 24 24"><path d="M2 2l13 13M15 2L2 15M1 6V1h5M11 1h5v5M1 11v5h5"/><circle cx="16" cy="16" r="5"/><path d="M20 20l4 4" stroke-width="3"/></svg></button>
      <svg class="nav-caret"><use href="#caret"/></svg>
      <button aria-label="Orbit"><svg viewBox="0 0 24 24"><path d="M10 23V7H8l4-6 4 6h-2v16z"/><ellipse cx="12" cy="14" rx="11" ry="5"/><path d="M3 17l5-3v6z" fill="#41484f"/></svg></button>
      <svg class="nav-caret"><use href="#caret"/></svg>
      <hr>
      <button aria-label="Show motion"><svg viewBox="0 0 24 24"><path d="M1 1h6v6H1zM9 1h6v6H9zM17 1h6v6h-6zM1 10h16v13H1z"/><path d="M6 13l6 4-6 4z" fill="#41484f"/></svg></button>
      <button class="nav-dot end" aria-label="Navigation options"><svg viewBox="0 0 8 8"><circle cx="4" cy="4" r="4" fill="#444a50"/><path d="M2 3.500h4M2 5.500h4" stroke="#777"/></svg></button>
    </div>

    <svg class="ucs" width="80" height="84"><path d="M5.500 75V24M5 74.500h51M1.500 69.500h9v9h-9z" fill="none" stroke="#eee"/><text x="7" y="19">Y</text><text x="60" y="72">X</text></svg>

    <div class="command">
      <div class="history">
        <p class="old">**** System Variable Changed ****</p>
        <p class="recent">1 of the monitored system variables has changed from the preferred value. Use SYSVARMONITOR command<br>to view changes.</p>
        <p>Command:</p>
      </div>
      <div class="command-line">
        <span class="grip"></span>
        <button aria-label="Close command line"><svg viewBox="0 0 10 10"><path d="M1 1l8 8M9 1L1 9" stroke="#ddd" stroke-width="2"/></svg></button>
        <button class="wrench" aria-label="Customize"><svg viewBox="0 0 14 14"><path d="M1 3l3 2 1-3c3-1 4 2 3 4l5 5-2 2-5-5C3 9 1 6 1 3z" fill="#ddd"/></svg></button>
        <div class="prompt">
          <svg width="16" height="14"><rect x=".5" y=".5" width="15" height="13" fill="#b8bcc0" stroke="#777"/><path d="M3 3l4 4-4 4M8 11h5" fill="none" stroke="#445"/></svg>
          <svg class="dark-caret" width="7" height="4"><path d="M0 0h7L3.500 4z" fill="#666"/></svg>
          <input type="text" placeholder="Type a command" aria-label="Command">
          <svg width="8" height="5"><path d="M0 5h8L4 0z" fill="#111"/></svg>
        </div>
      </div>
    </div>
  </main>

  <!-- Layout tabs and status bar -->
  <footer>
    <nav class="layouts">
      <a class="current" href="#">Model</a><a href="#">V-01-EG-01</a><a class="add" href="#" aria-label="New layout"><svg width="8" height="8"><path d="M4 0v8M0 4h8" stroke="#ddd" stroke-width="2"/></svg></a>
    </nav>
    <div class="status">
      <button class="coords">55.04, -12.78, 0.00</button>
      <button class="space">MODEL</button>
      <div class="group">
        <button aria-label="Grid"><svg viewBox="0 0 16 16"><path d="M4.500 0v16M8.500 0v16M12.500 0v16M0 4.500h16M0 8.500h16M0 12.500h16" stroke="#ddd"/></svg></button>
        <button aria-label="Snap"><svg viewBox="0 0 16 16"><path d="M2 2h2v2H2zM7 2h2v2H7zM12 2h2v2h-2zM2 7h2v2H2zM7 7h2v2H7zM12 7h2v2h-2zM2 12h2v2H2zM7 12h2v2H7zM12 12h2v2h-2z" fill="#ddd"/></svg></button>
        <button class="drop" aria-label="Snap options"><svg><use href="#caret"/></svg></button>
      </div>
      <div class="group">
        <button aria-label="Infer constraints"><svg viewBox="0 0 16 16"><path d="M1 10h7v6H1z" fill="#ddd"/><path d="M8.500 10V.5h6v6h-6" fill="none" stroke="#ddd"/></svg></button>
        <button class="on" aria-label="Dynamic input"><svg viewBox="0 0 16 16"><path d="M4 2v8M0 6h8" stroke="#fff"/><path d="M6 11h10v4H6z" fill="#fff"/></svg></button>
        <button aria-label="Ortho"><svg viewBox="0 0 16 16"><path d="M1.500 0v14.500H16M1 9.500h5.500V15" fill="none" stroke="#ddd"/></svg></button>
        <button aria-label="Polar"><svg viewBox="0 0 16 16"><path d="M12 4a6 6 0 1 0 2 4M7 9h9M7 9l7-8" fill="none" stroke="#ddd"/></svg></button>
        <button class="drop" aria-label="Polar options"><svg><use href="#caret"/></svg></button>
        <button aria-label="Isometric"><svg viewBox="0 0 16 16"><path d="M2 2l12 12" stroke="#c06a50"/><path d="M8.500 0v16" stroke="#76b890"/><path d="M6 8h5" stroke="#ddd"/></svg></button>
        <button class="drop" aria-label="Isometric options"><svg><use href="#caret"/></svg></button>
        <button class="on" aria-label="Tracking"><svg viewBox="0 0 16 16"><path d="M15 1L2 14h14" fill="none" stroke="#fff"/><path d="M5 9l4 5" stroke="#fff"/></svg></button>
        <button class="on" aria-label="Object snap"><svg viewBox="0 0 16 16"><path d="M0 .5h5v5H0zM6 3.500h9v12H2.500V7" fill="none" stroke="#fff"/></svg></button>
        <button class="drop" aria-label="Object snap options"><svg><use href="#caret"/></svg></button>
        <button class="cut" aria-label="Lineweight"><svg viewBox="0 0 16 16"><path d="M0 2h16M0 6h10M0 10h14M0 14h16" stroke="#ddd" stroke-width="2"/></svg></button>
        <button class="on" aria-label="Transparency"><svg viewBox="0 0 16 16"><path d="M.5.5h15v15H.5z" fill="none" stroke="#fff"/><path d="M2 2h3v3h3V2h3v3h3v3h-3v3h3v3h-3v-3H8v3H5v-3H2V8h3V5H2zM5 8v3h3V8zM8 5v3h3V5z" fill="#fff"/></svg></button>
        <button aria-label="Selection cycling"><svg viewBox="0 0 16 16"><path d="M3 0v6M0 3h6" stroke="#ddd"/><path d="M6 5h10v11H6z" fill="#83ba92"/><path d="M4 14V7" stroke="#ddd" stroke-dasharray="2 1"/></svg></button>
        <button aria-label="3D snap"><svg viewBox="0 0 16 16"><path d="M3 9V4l4-3h8v7l-4 4H6M3 4h8v8M11 4l4-3" fill="none" stroke="#ddd"/><path d="M.5 11.500h4v4h-4z" fill="none" stroke="#f0b070"/></svg></button>
        <button class="drop" aria-label="3D snap options"><svg><use href="#caret"/></svg></button>
      </div>
      <div class="group">
        <button class="on" aria-label="Dynamic UCS"><svg viewBox="0 0 16 16"><path d="M3 1v12h12M1 3l2-3 2 3M13 11l3 2-3 2" fill="none" stroke="#fff"/><path d="M11 2L7 7h3l-1 4 4-5h-3z" fill="#fff"/></svg></button>
        <button aria-label="Filter"><svg viewBox="0 0 16 16"><path d="M2 14V5l4-4h9v9l-4 4zM2 5h9v9" fill="none" stroke="#ddd" stroke-dasharray="3 1"/><path d="M0 4h3v3H0zM10 4h3v3h-3zM0 13h3v3H0zM10 13h3v3h-3z" fill="#6cb8f6"/></svg></button>
        <button class="drop" aria-label="Filter options"><svg><use href="#caret"/></svg></button>
        <button class="on" aria-label="Gizmo"><svg viewBox="0 0 16 16"><path d="M8 2v7M8 9l-6 4M8 9l6 4M8 2L3 6v6l5 3 5-3V6z" fill="none" stroke="#fff"/><circle cx="8" cy="2" r="2" fill="#fff"/><circle cx="2" cy="13" r="2" fill="#fff"/><circle cx="14" cy="13" r="2" fill="#fff"/></svg></button>
        <button class="drop" aria-label="Gizmo options"><svg><use href="#caret"/></svg></button>
      </div>
      <div class="group">
        <button class="on" aria-label="Annotation visibility"><svg viewBox="0 0 16 16"><path d="M6 0h3l1 7 5 9-5-4-3-2-2 2-5 4 5-8z" fill="#fff"/><circle cx="13" cy="3" r="2" fill="none" stroke="#fff"/></svg></button>
        <button aria-label="Auto scale"><svg viewBox="0 0 16 16"><path d="M5 1h3l1 7 4 8-6-5-6 5 3-8z" fill="#ddd"/><path d="M14 0l-3 4h2l-1 4 4-5h-3z" fill="#ddd"/></svg></button>
        <button aria-label="Annotation scale"><svg viewBox="0 0 16 16"><path d="M7 1h2l2 7 4 8-7-5-7 5 4-8z" fill="#ddd"/></svg></button>
        <button class="scale">1:1 / 100%<svg><use href="#caret"/></svg></button>
      </div>
      <div class="group">
        <button aria-label="Workspace"><svg viewBox="0 0 16 16"><circle cx="8" cy="8" r="4" fill="none" stroke="#ddd" stroke-width="3"/><path d="M8 0v3M8 13v3M0 8h3M13 8h3M2 2l3 3M11 11l3 3M14 2l-3 3M5 11l-3 3" stroke="#ddd" stroke-width="3"/></svg></button>
        <button class="drop" aria-label="Workspace options"><svg><use href="#caret"/></svg></button>
        <button class="cut" aria-label="Annotation monitor"><svg viewBox="0 0 16 16"><path d="M8 0v16M0 8h16" stroke="#ddd" stroke-width="2"/></svg></button>
      </div>
      <div class="group">
        <button aria-label="Units"><svg viewBox="0 0 16 16"><path d="M4 0h8v2H9v2h3v1H9v2h3v2H9v2h3v1H9v2h3v2H4z" fill="#ddd"/></svg></button>
        <button class="units">Decimal<svg><use href="#caret"/></svg></button>
        <button class="cut" aria-label="Quick properties"><svg viewBox="0 0 16 16"><path d="M2.500.5h11v15h-11zM2 3.500h12" fill="none" stroke="#ddd"/><path d="M5 6.500h1M7 6.500h5M5 9.500h1M7 9.500h5M5 12.500h1M7 12.500h5" stroke="#ddd"/></svg></button>
      </div>
      <div class="group">
        <button aria-label="Lock UI"><svg viewBox="0 0 16 16"><path d="M8 13.500H.5v-13h14V5M12 3h3" fill="none" stroke="#ddd"/><path d="M8 11h7v5H8z" fill="#ddd"/><path d="M13 11V9c0-2 3-2 3 0" fill="none" stroke="#ddd"/></svg></button>
        <button class="drop" aria-label="Lock options"><svg><use href="#caret"/></svg></button>
        <button class="cut" aria-label="Isolate objects"><svg viewBox="0 0 16 16"><path d="M1 .5h6v6H1zM7 10l3.500 5.500h-7z" fill="none" stroke="#ddd"/><circle cx="12.500" cy="8" r="3" fill="none" stroke="#ddd"/></svg></button>
      </div>
      <div class="group">
        <button class="on" aria-label="Hardware acceleration"><svg viewBox="0 0 16 16"><circle cx="8" cy="8" r="7" fill="#8db0d8" stroke="#ddd" stroke-width="2"/><path d="M3 12l9-9M6 14l7-7" stroke="#ddd"/></svg></button>
      </div>
      <div class="group">
        <button aria-label="Trusted file"><svg viewBox="0 0 16 16"><path d="M1 0h6v5h5v6H1z" fill="#6cb8f6"/><path d="M7 0l5 5H7z" fill="#fff"/><path d="M1 8h12v6H1z" fill="#e8c080"/><path d="M8 12l3 3 5-6" fill="none" stroke="#22a02a" stroke-width="2"/></svg></button>
        <button aria-label="System variables"><svg viewBox="0 0 16 16"><path d="M1 0h12v11H1z" fill="#f0f0f0"/><path d="M2 8l3-5 3 4 4-6" stroke="#333" fill="none"/><path d="M12 7l4 9H8z" fill="#c0694a"/></svg></button>
      </div>
      <div class="group">
        <button aria-label="Full screen"><svg viewBox="0 0 16 16"><path d="M.5 2.500h15v11H.5z" fill="none" stroke="#ddd"/><path d="M3 8v4h4zM13 8V4H9z" fill="#ddd"/></svg></button>
        <button aria-label="Customization"><svg viewBox="0 0 16 16"><path d="M0 2h16M0 8h16M0 14h16" stroke="#ddd" stroke-width="2"/></svg></button>
      </div>
    </div>
  </footer>
</body>
</html>
```

FILE: styles.css
```css
* { box-sizing: border-box; }

html, body { height: 100%; }

body {
  margin: 0;
  display: flex;
  flex-direction: column;
  overflow: hidden;
  background: #212830;
  color: #f2f2f2;
  font: 12px/16px "Open Sans", "Noto Sans", sans-serif;
}

h1, h2, p { margin: 0; font-size: 12px; font-weight: normal; }
a { color: inherit; text-decoration: none; }
button, select, input { font: inherit; color: inherit; margin: 0; padding: 0; border: 0; background: none; }
svg { display: block; flex: none; }
.sprite { position: absolute; width: 0; height: 0; }
.caret { width: 7px; height: 4px; }

/* Title bar and ribbon tabs */
.top {
  display: grid;
  grid-template-columns: 41px 1fr;
  grid-template-rows: 24px 21px;
  background: #545454;
}

.app-button {
  grid-row: 1 / 3;
  height: 41px;
  border: 1px solid #1c1414;
  background: linear-gradient(#d0d0d0, #8a8a8a 50%, #5c5c5c);
}

.logo-a { font: bold 34px "Liberation Sans", sans-serif; fill: #b3262b; }

.title-bar {
  display: flex;
  background: #5f2014;
  border-bottom: 1px solid #2c2c2c;
  min-width: 0;
}

.quick, .info { display: flex; align-items: center; background: #a0a0a0; }
.quick { width: 310px; padding-left: 5px; }
.quick button { width: 24px; display: flex; justify-content: center; }
.quick svg, .info button svg, .sign-in svg { width: 18px; height: 18px; }
.quick .caret { width: 6px; height: 4px; margin: 0 3px; }
.quick button:nth-of-type(n + 8) { margin-left: 1px; }
.quick .quick-more svg { width: 10px; height: 10px; }

.title-bar h1 {
  flex: 1;
  color: #150704;
  text-align: center;
  line-height: 24px;
  white-space: nowrap;
  overflow: hidden;
}

.info { width: 447px; }
.info button { width: 24px; display: flex; justify-content: center; }
.info .info-toggle { width: 14px; }
.info .info-toggle svg { width: 5px; height: 8px; }
.info .search {
  width: 181px;
  height: 22px;
  padding: 0 4px;
  border: 1px solid #3c3c3c;
  background: #707070;
}
.search::placeholder { color: #d4d4d4; font-style: italic; opacity: 1; }
.sign-in { display: flex; align-items: center; gap: 3px; padding-left: 3px; flex: 1; color: #f4f4f4; }
.info .caret { width: 6px; height: 4px; margin: 0 4px; }
.info .store { margin-left: 3px; }
.info .help { margin-left: 8px; }
.help-mark { font: bold 13px "Open Sans", sans-serif; fill: #2858b8; }

.window-buttons { display: flex; width: 162px; padding-left: 25px; }
.window-buttons button { width: 45px; display: flex; justify-content: center; align-items: center; }
.window-buttons svg { width: 12px; height: 12px; }

.ribbon-tabs { display: flex; align-items: flex-end; padding-left: 5px; border-bottom: 1px solid #333; }
.ribbon-tabs a {
  height: 18px;
  padding: 0 8px;
  color: #d0d0d0;
  line-height: 16px;
  border: 1px solid transparent;
  border-bottom: 0;
}
.ribbon-tabs .current { background: #5f5f5f; color: #fff; border-color: #333 #333 transparent; }
.ribbon-tabs .hover { background: #595959; color: #fff; border-color: #777; }
.ribbon-toggle { display: flex; align-items: center; gap: 6px; height: 18px; padding-left: 18px; }

/* Ribbon panels */
.ribbon {
  display: flex;
  gap: 1px;
  height: 98px;
  padding: 0 2px;
  border-bottom: 1px solid #2b2b2b;
  background: linear-gradient(#4e4e4e, #363939);
}
.panel {
  display: flex;
  flex-direction: column;
  flex: none;
  background: #5c5c5c;
  border-right: 1px solid #484848;
}
.draw { width: 224px; }
.modify { width: 249px; }
.annotation { width: 188px; }
.layers { width: 272px; }
.block { width: 160px; }
.properties { width: 265px; }
.groups { width: 68px; }
.utilities { width: 96px; }
.clipboard { width: 79px; }
.view { width: 60px; }

.tools { display: flex; height: 79px; padding-top: 4px; }
.panel h2 {
  position: relative;
  display: flex;
  align-items: center;
  justify-content: center;
  gap: 6px;
  height: 18px;
  background: linear-gradient(#4c4c4c, #585858);
}
.panel h2 .caret { width: 8px; height: 5px; }
.panel h2 .launch { position: absolute; right: 3px; top: 6px; width: 7px; height: 7px; }
.view h2 { justify-content: flex-start; padding-left: 4px; }

.big {
  display: flex;
  flex-direction: column;
  align-items: center;
  height: 75px;
  padding-top: 2px;
  line-height: 15px;
}
.big > svg:first-child { width: 32px; height: 32px; margin-bottom: 4px; overflow: visible; }
.big .caret { width: 6px; height: 4px; margin-top: 2px; }
.big-a { font: 36px "Liberation Sans", sans-serif; fill: #ddd; text-anchor: middle; }
.w-line { width: 42px; }
.w-poly, .w-circle { width: 48px; }
.w-arc { width: 46px; padding-right: 2px; }
.w-text { width: 46px; }
.w-dim { width: 62px; }
.w-layer { width: 60px; }
.w-insert { width: 42px; }
.w-match { width: 62px; }
.w-group { width: 42px; }
.w-measure { width: 70px; }
.w-paste { width: 54px; }
.w-base { width: 60px; }

.stack { display: flex; flex-direction: column; }
.small {
  display: flex;
  align-items: center;
  gap: 5px;
  height: 24px;
  padding-left: 4px;
  white-space: nowrap;
}
.small > svg:first-child, .row svg, .cell svg { width: 16px; height: 16px; }
.small .caret { width: 6px; height: 4px; margin-left: 2px; }
.draw .stack { margin-left: -3px; }
.modify .tools { padding-left: 2px; }
.col-a { width: 72px; }
.col-b { width: 69px; }
.col-c { width: 75px; }
.small.on { width: 25px; height: 23px; border: 1px solid #1d3d70; background: linear-gradient(#7c9fd0, #4c70b0); padding-left: 3px; }

.layer-side { flex: 1; padding-right: 1px; }
.combo {
  display: flex;
  align-items: center;
  height: 22px;
  padding: 0 2px 0 5px;
  border: 1px solid #2e2e2e;
  background: linear-gradient(#656565, #505050);
}
.layer-side .combo { margin: 1px 0; }
.combo select { flex: 1; appearance: none; outline: 0; }
.combo .caret { width: 8px; height: 5px; }
.swatch { width: 16px; height: 16px; margin: 0 10px 0 8px; background: #fff; }
.small-swatch { width: 14px; height: 14px; margin: 0 5px 0 4px; border: 1px solid #222; }
.rule { width: 64px; height: 1px; margin: 0 2px 0 -2px; background: #eee; }
.combos { width: 181px; gap: 2px; padding-top: 1px; }
.icons { width: 20px; }
.cell { display: flex; align-items: center; height: 24px; padding-left: 2px; }
.row { display: flex; height: 24px; }
.row button { width: 24px; display: flex; align-items: center; padding-left: 4px; white-space: nowrap; }
.row .make { width: auto; gap: 6px; }

/* Drawing tabs */
.file-tabs {
  display: flex;
  align-items: flex-end;
  height: 30px;
  padding: 0 8px 0 16px;
  background: #353837;
  border-top: 1px solid #777;
  border-bottom: 4px solid #575757;
  font-family: Roboto, sans-serif;
}
.file-tab {
  display: flex;
  align-items: center;
  justify-content: space-between;
  height: 22px;
  margin-right: -12px;
  padding: 0 18px 0 16px;
  color: #b2b2b2;
  white-space: nowrap;
  background: linear-gradient(#5f5f5f, #4c4c4c);
  clip-path: polygon(0 100%, 4px 85%, 8px 15%, 14px 0, calc(100% - 14px) 0, calc(100% - 8px) 15%, calc(100% - 4px) 85%, 100% 100%);
}
.file-tab svg { width: 8px; height: 8px; }
.start { width: 135px; }
.riser { width: 205px; }
.water { width: 278px; }
.drain { width: 219px; }
.gully { width: 180px; }
.install { width: 236px; }
.file-tab.active { width: 280px; color: #fff; background: linear-gradient(#7c7c7c, #5a5a5a); }
.new-tab {
  display: flex;
  align-items: center;
  justify-content: center;
  width: 23px;
  height: 15px;
  margin: 0 0 2px 16px;
  border-radius: 3px 10px 3px 10px;
  background: #5c5c5c;
}
.new-tab svg { width: 8px; height: 8px; }
.tab-menu { margin: 0 0 6px auto; }

/* Model space */
.model {
  position: relative;
  flex: 1;
  min-height: 0;
  border-right: 6px solid #d9e4f5;
}
.view-label { padding: 6px 3px; color: #e0e0e0; }
.view-buttons { position: absolute; top: 10px; right: 11px; display: flex; gap: 10px; }
.view-buttons svg { width: 10px; height: 10px; }
.drawing { position: absolute; left: 330px; top: 187px; width: 900px; height: 380px; }
.cad { font: bold 6px "Roboto Condensed", "Liberation Sans Narrow", sans-serif; fill: #f0f0f0; }
.sheet-title { font: 300 22px "Roboto Condensed", "Liberation Sans Narrow", sans-serif; fill: #00d80c; }

.view-cube { position: absolute; top: 39px; right: 15px; display: flex; flex-direction: column; align-items: center; }
.compass { font: bold 22px "Liberation Sans", sans-serif; fill: #b4b4b4; text-anchor: middle; }
.cube-face { font: bold 12px "Open Sans", sans-serif; fill: #444b53; text-anchor: middle; }
.wcs {
  display: flex;
  align-items: center;
  gap: 4px;
  width: 48px;
  height: 18px;
  margin-top: 20px;
  padding: 0 4px;
  border: 1px solid #777;
  border-radius: 4px;
  background: #96989a;
  color: #4a4a4a;
  font: 11px "Liberation Sans", sans-serif;
}

.nav-bar {
  position: absolute;
  top: 236px;
  right: 4px;
  display: flex;
  flex-direction: column;
  align-items: center;
  width: 32px;
  height: 212px;
  border-radius: 3px;
  border: 1px solid #6c7073;
  background: #5b5f62;
}
.nav-bar button svg { width: 24px; height: 24px; fill: none; stroke: #41484f; }
.nav-bar button { margin-bottom: 2px; }
.nav-bar .wheel { margin: 8px 0 5px; }
.nav-bar .nav-dot { align-self: flex-end; margin: 1px 1px 0; }
.nav-bar .nav-dot svg { width: 8px; height: 8px; stroke: none; }
.nav-bar .end { margin-top: auto; margin-bottom: 1px; }
.nav-caret { width: 6px; height: 3px; margin: 2px 0 5px; filter: brightness(0.25); }
.nav-bar hr { width: 26px; margin: 0 0 4px; border: 0; border-top: 1px solid #707477; }

.ucs { position: absolute; left: 15px; bottom: 10px; }
.ucs text { font: 300 18px Lato, sans-serif; fill: #eee; }

/* Command line */
.command {
  position: absolute;
  left: 8px;
  right: 0;
  bottom: 0;
  width: 776px;
  margin: 0 auto;
  font: 12px/15px "DejaVu Sans Mono", monospace;
}
.history { display: flex; flex-direction: column; align-items: flex-start; gap: 5px; padding: 0 0 4px 60px; }
.history p { padding: 0 2px; border-radius: 2px; background: #5c5c5c; white-space: nowrap; }
.history .old { color: #b8b8b8; background: #505050; }
.history .recent { color: #dcdcdc; }
.command-line { display: flex; align-items: center; height: 26px; background: #4c4c4c; border: 1px solid #777; }
.grip { width: 6px; height: 18px; margin: 0 5px 0 3px; background: radial-gradient(#999 1px, transparent 1px) 0 0 / 3px 3px; }
.command-line button { width: 12px; margin-right: 9px; }
.command-line button svg { width: 10px; height: 10px; }
.command-line .wrench { width: 14px; margin-right: 3px; }
.command-line .wrench svg { width: 14px; height: 14px; }
.prompt { display: flex; flex: 1; align-items: center; height: 24px; padding: 0 3px 0 6px; background: #bdbec0; }
.prompt .dark-caret { margin: 0 7px 0 3px; }
.prompt input { flex: 1; color: #333; outline: 0; }
.prompt input::placeholder { color: #6c6c6c; font-style: italic; opacity: 1; }

/* Footer */
footer { display: flex; justify-content: space-between; height: 23px; background: #3a3b3b; }
.layouts { display: flex; padding-left: 13px; border-top: 1px solid #555; }
.layouts a {
  height: 18px;
  padding: 0 10px;
  margin-right: -1px;
  color: #b8b8b8;
  line-height: 16px;
  background: #4e4e4e;
  clip-path: polygon(0 0, 100% 0, calc(100% - 4px) 20%, calc(100% - 7px) 90%, calc(100% - 10px) 100%, 10px 100%, 7px 90%, 4px 20%);
}
.layouts .current { background: #757575; color: #fff; font-weight: bold; }
.layouts .add { display: flex; align-items: center; width: 24px; margin-left: 5px; padding: 0 8px; border-radius: 10px 3px; clip-path: none; background: #5a5a5a; height: 16px; }

.status { display: flex; border-top: 1px solid #777; background: #6c6c6c; gap: 1px; padding-left: 1px; }
.status button { display: flex; align-items: center; justify-content: center; height: 22px; width: 24px; padding-top: 2px; white-space: nowrap; background: #505050; }
.status button svg { width: 16px; height: 16px; }
.status .coords { width: 142px; justify-content: flex-end; padding-right: 6px; }
.status .space { width: 50px; }
.group { display: flex; padding-right: 1px; background: #505050; }
.status .on { background: #5f8fc4; }
.status .drop { width: 16px; }
.status .drop svg, .status .scale svg, .status .units svg { width: 7px; height: 5px; }
.status .scale { width: 73px; gap: 5px; }
.status .units { width: 74px; gap: 14px; }
.status .cut { width: 26px; border-left: 1px solid #6c6c6c; }
```
